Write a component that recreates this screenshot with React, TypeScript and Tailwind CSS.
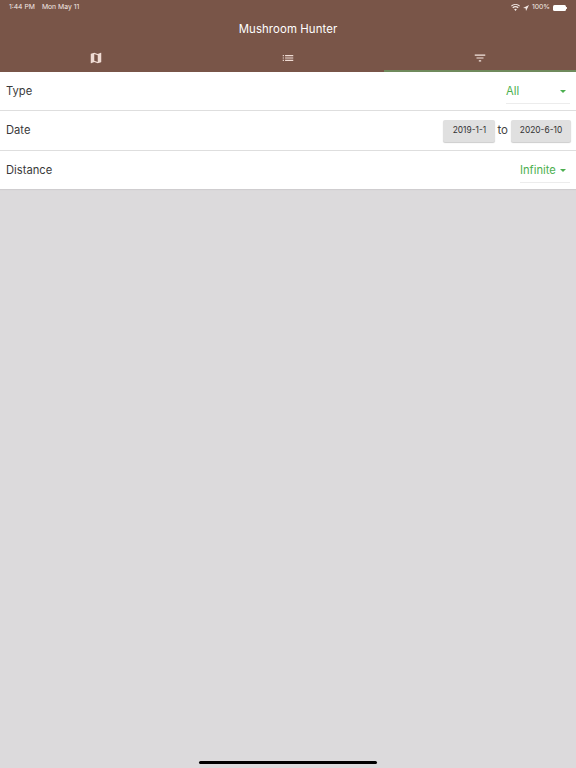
function Dropdown({ label, width }: { label: string; width: string }) {
  return (
    <div className={`flex items-center justify-between border-b border-[#ececec] h-[26px] pt-[2px] ${width}`}>
      <span className="text-[11.2px] text-[#4caf50]">{label}</span>
      <svg width="6" height="3" viewBox="0 0 6 3" className="mr-[4px]">
        <path d="M0 0h6L3 3z" fill="#4caf50" />
      </svg>
    </div>
  )
}

function DateButton({ label, width }: { label: string; width: string }) {
  return (
    <div
      className={`flex items-center justify-center h-[22px] rounded-[2px] bg-[#e0e0e0] text-[8.4px] text-[#333333] shadow-[0_1px_1px_rgba(0,0,0,0.2)] ${width}`}
    >
      {label}
    </div>
  )
}

export default function App() {
  return (
    <div className="relative flex flex-col h-[768px] w-[576px] overflow-hidden bg-[#dcdadc] font-['Inter',sans-serif]">
      {/* App bar */}
      <header className="bg-[#795548] text-white h-[72px] flex flex-col shrink-0">
        <div className="flex items-center justify-between h-[14px] pt-[1px] px-[9px] text-[6.8px] text-[#f3e9e5]">
          <div className="flex gap-[7px]">
            <span>1:44 PM</span>
            <span>Mon May 11</span>
          </div>
          <div className="flex items-center gap-[2px]">
            <svg width="9" height="7" viewBox="0 0 24 18" fill="#f3e9e5">
              <path d="M12 18l-3.6-4.2a5.6 5.6 0 0 1 7.2 0zM5.8 10.8L3.6 8.3a13 13 0 0 1 16.8 0l-2.2 2.5a9.6 9.6 0 0 0-12.4 0zM1.8 6.2L0 4a18.6 18.6 0 0 1 24 0l-1.8 2.2a15.8 15.8 0 0 0-20.4 0z" />
            </svg>
            <svg width="6" height="6" viewBox="0 0 10 10" fill="#f3e9e5" className="ml-[1px]">
              <path d="M10 0L0 5l4.4.6L5 10z" />
            </svg>
            <span className="ml-[1px]">100%</span>
            <div className="flex items-center ml-[1px]">
              <div className="w-[13px] h-[6px] rounded-[1.5px] bg-white" />
              <div className="w-[1px] h-[2px] bg-[#f3e9e5]" />
            </div>
          </div>
        </div>
        <div className="flex items-center justify-center h-[30px] text-[11.4px] tracking-[0.1px] pt-[2px]">
          Mushroom Hunter
        </div>
        <nav className="grid grid-cols-3 flex-1">
          <div className="flex items-center justify-center">
            <svg width="14" height="14" viewBox="0 0 24 24" fill="#f0dcd4">
              <path d="M20.5 3l-.16.03L15 5.1 9 3 3.36 4.9c-.21.07-.36.25-.36.48V20.5c0 .28.22.5.5.5l.16-.03L9 18.9l6 2.1 5.64-1.9c.21-.07.36-.25.36-.48V3.5c0-.28-.22-.5-.5-.5zM15 19l-6-2.11V5l6 2.11V19z" />
            </svg>
          </div>
          <div className="flex items-center justify-center">
            <svg width="14" height="14" viewBox="0 0 24 24" fill="#f0dcd4">
              <path d="M3 13h2v-2H3v2zm0 4h2v-2H3v2zm0-8h2V7H3v2zm4 4h14v-2H7v2zm0 4h14v-2H7v2zM7 7v2h14V7H7z" />
            </svg>
          </div>
          <div className="flex items-center justify-center border-b-2 border-[#6f8a5c]">
            <svg width="14" height="14" viewBox="0 0 24 24" fill="#f5e6df" className="mt-[2px]">
              <path d="M10 18h4v-2h-4v2zM3 6v2h18V6H3zm3 7h12v-2H6v2z" />
            </svg>
          </div>
        </nav>
      </header>

      {/* Filters */}
      <section className="bg-white text-[11.2px] text-[#3a3a3a] shadow-[0_1px_1px_rgba(0,0,0,0.06)]">
        <div className="flex items-center justify-between h-[39px] px-[6px] border-b border-[#dedede]">
          <span className="pt-[1px]">Type</span>
          <Dropdown label="All" width="w-[64px]" />
        </div>
        <div className="flex items-center justify-between h-[40px] pl-[6px] pr-[5px] border-b border-[#dedede]">
          <span>Date</span>
          <div className="flex items-center gap-[3px]">
            <DateButton label="2019-1-1" width="w-[52px]" />
            <span className="text-[11.5px] text-[#444444] pt-[1px] -ml-[1px]">to</span>
            <DateButton label="2020-6-10" width="w-[60px]" />
          </div>
        </div>
        <div className="flex items-center justify-between h-[38px] px-[6px]">
          <span className="pt-[1px]">Distance</span>
          <Dropdown label="Infinite" width="w-[50px]" />
        </div>
      </section>

      {/* Home indicator */}
      <div className="absolute bottom-[4px] left-[199px] w-[178px] h-[3px] rounded-full bg-black" />
    </div>
  )
}
